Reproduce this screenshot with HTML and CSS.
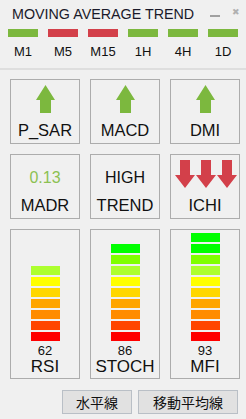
FILE: index.html
```html
<!DOCTYPE html>
<html lang="ja">
<head>
    <meta charset="UTF-8">
    <title>Moving Average Trend</title>
    <link rel="stylesheet" href="styles.css">
</head>
<body>
    <div class="panel">
        <div class="header">
            <div class="titlebar">
                <span class="title">MOVING AVERAGE TREND</span>
                <span class="min"></span>
                <span class="close">&#x2716;</span>
            </div>
            <div class="strip">
                <div class="tf"><div class="bar up"></div><span>M1</span></div>
                <div class="tf"><div class="bar down"></div><span>M5</span></div>
                <div class="tf"><div class="bar down"></div><span>M15</span></div>
                <div class="tf"><div class="bar up"></div><span>1H</span></div>
                <div class="tf"><div class="bar up"></div><span>4H</span></div>
                <div class="tf"><div class="bar up"></div><span>1D</span></div>
            </div>
        </div>

        <div class="grid">
            <!-- row 1 -->
            <div class="box">
                <svg class="arrow" width="19" height="28" viewBox="0 0 19 28"><polygon points="9.5,0 19,15 15,15 15,28 4,28 4,15 0,15" /></svg>
                <span class="label">P_SAR</span>
            </div>
            <div class="box">
                <svg class="arrow" width="19" height="28" viewBox="0 0 19 28"><polygon points="9.5,0 19,15 15,15 15,28 4,28 4,15 0,15" /></svg>
                <span class="label">MACD</span>
            </div>
            <div class="box">
                <svg class="arrow" width="19" height="28" viewBox="0 0 19 28"><polygon points="9.5,0 19,15 15,15 15,28 4,28 4,15 0,15" /></svg>
                <span class="label">DMI</span>
            </div>

            <!-- row 2 -->
            <div class="box">
                <span class="value">0.13</span>
                <span class="label">MADR</span>
            </div>
            <div class="box">
                <span class="value dark">HIGH</span>
                <span class="label">TREND</span>
            </div>
            <div class="box">
                <svg class="downs" width="62" height="28" viewBox="0 0 62 28">
                    <polygon points="5,0 15,0 15,15 20,15 10,28 0,15 5,15" />
                    <polygon points="26,0 36,0 36,15 41,15 31,28 21,15 26,15" />
                    <polygon points="47,0 57,0 57,15 62,15 52,28 42,15 47,15" />
                </svg>
                <span class="label">ICHI</span>
            </div>

            <!-- row 3 -->
            <div class="box meter">
                <div class="levels">
                    <div class="lv c7"></div>
                    <div class="lv c6"></div>
                    <div class="lv c5"></div>
                    <div class="lv c4"></div>
                    <div class="lv c3"></div>
                    <div class="lv c2"></div>
                    <div class="lv c1"></div>
                </div>
                <span class="num">62</span>
                <span class="name">RSI</span>
            </div>
            <div class="box meter">
                <div class="levels">
                    <div class="lv c9"></div>
                    <div class="lv c8"></div>
                    <div class="lv c7"></div>
                    <div class="lv c6"></div>
                    <div class="lv c5"></div>
                    <div class="lv c4"></div>
                    <div class="lv c3"></div>
                    <div class="lv c2"></div>
                    <div class="lv c1"></div>
                </div>
                <span class="num">86</span>
                <span class="name">STOCH</span>
            </div>
            <div class="box meter">
                <div class="levels">
                    <div class="lv c9"></div>
                    <div class="lv c9"></div>
                    <div class="lv c8"></div>
                    <div class="lv c7"></div>
                    <div class="lv c6"></div>
                    <div class="lv c5"></div>
                    <div class="lv c4"></div>
                    <div class="lv c3"></div>
                    <div class="lv c2"></div>
                    <div class="lv c1"></div>
                </div>
                <span class="num">93</span>
                <span class="name">MFI</span>
            </div>
        </div>

        <div class="buttons">
            <button class="btn short">水平線</button>
            <button class="btn long">移動平均線</button>
        </div>
    </div>
</body>
</html>
```

FILE: styles.css
```css
* {
    padding: 0;
    margin: 0;
    box-sizing: border-box;
    font-family: "Liberation Sans", "Noto Sans CJK JP", sans-serif;
}

body {
    background-color: #f0f0f0;
    color: #111;
}

.panel {
    width: 246px;
    height: 419px;
}

.header {
    height: 68px;
    border-bottom: 2px solid #dedede;
    box-sizing: content-box;
}

.titlebar {
    display: flex;
    align-items: center;
    height: 26px;
    padding: 2px 0 0 12px;
}

.title {
    font-size: 14.3px;
    color: #1a1a2a;
    flex: 1;
}

.min {
    width: 10px;
    height: 2px;
    background-color: #a0a0a0;
    margin: 4px 12px 0 0;
}

.close {
    font-size: 9px;
    color: #b0b0b0;
    margin: -4px 6px 0 0;
}

.strip {
    display: grid;
    grid-template-columns: repeat(6, 30px);
    column-gap: 10px;
    padding: 3px 0 0 8px;
}

.tf {
    display: flex;
    flex-direction: column;
    align-items: center;
}

.tf .bar {
    width: 30px;
    height: 8px;
}

.tf span {
    font-size: 13px;
    margin-top: 7px;
    line-height: 15px;
}

.bar.up {
    background-color: #7cb83e;
}

.bar.down {
    background-color: #d3404a;
}

.grid {
    display: grid;
    grid-template-columns: repeat(3, 70px);
    grid-template-rows: 65px 65px 150px;
    gap: 10px;
    padding: 9px 0 0 10px;
}

.box {
    border: 1px solid #acacac;
    display: flex;
    flex-direction: column;
    align-items: center;
    justify-content: space-between;
    padding: 5px 0 3px;
}

.arrow polygon {
    fill: #7cb83e;
}

.downs {
    margin-left: 1px;
}

.downs polygon {
    fill: #d3404a;
}

.label {
    font-size: 16.5px;
    line-height: 20px;
}

.value {
    font-size: 16px;
    line-height: 20px;
    margin-top: 8px;
    color: #8cc152;
}

.value.dark {
    color: #111;
}

.meter {
    justify-content: flex-end;
    padding: 0 0 3px;
}

.levels {
    display: flex;
    flex-direction: column;
    gap: 2px;
}

.lv {
    width: 29px;
    height: 9px;
}

.c1 { background-color: #ff0000; }
.c2 { background-color: #ff4500; }
.c3 { background-color: #ff8c00; }
.c4 { background-color: #ffa500; }
.c5 { background-color: #ffd700; }
.c6 { background-color: #ffff00; }
.c7 { background-color: #adff2f; }
.c8 { background-color: #7fff00; }
.c9 { background-color: #00ff00; }

.num {
    font-size: 13px;
    line-height: 14px;
    margin-top: 3px;
}

.name {
    font-size: 17px;
    line-height: 17px;
}

.buttons {
    display: flex;
    justify-content: flex-end;
    gap: 6px;
    padding: 11px 8px 0 0;
}

.btn {
    height: 24px;
    background-color: #e1e1e1;
    border: 1px solid #b9bfc6;
    font-size: 14px;
    color: #111;
    font-family: "Noto Sans CJK JP", sans-serif;
}

.btn.short {
    width: 70px;
}

.btn.long {
    width: 100px;
}
```
